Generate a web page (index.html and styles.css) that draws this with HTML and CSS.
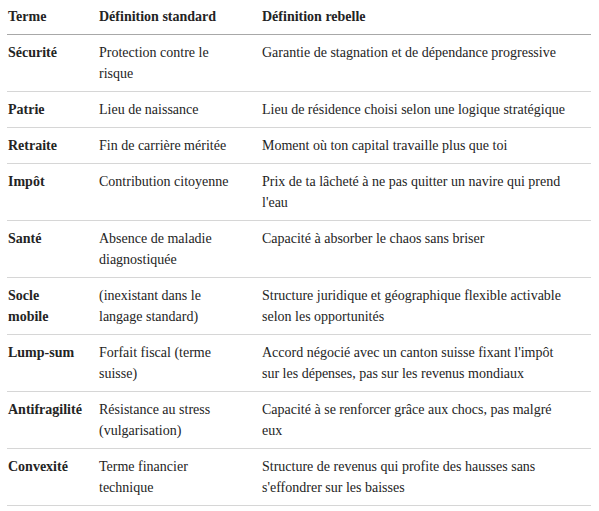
FILE: index.html
```html
<!DOCTYPE html>
<html lang="fr">
<head>
<meta charset="utf-8">
<link rel="stylesheet" href="styles.css">
</head>
<body>
<table class="defs">
  <colgroup>
    <col class="c1"><col class="c2"><col class="c3">
  </colgroup>
  <thead>
    <tr><th>Terme</th><th>Définition standard</th><th>Définition rebelle</th></tr>
  </thead>
  <tbody>
    <tr><td class="term">Sécurité</td><td>Protection contre le risque</td><td class="rebel">Garantie de stagnation et de dépendance progressive</td></tr>
    <tr><td class="term">Patrie</td><td>Lieu de naissance</td><td class="rebel">Lieu de résidence choisi selon une logique stratégique</td></tr>
    <tr><td class="term">Retraite</td><td>Fin de carrière méritée</td><td class="rebel">Moment où ton capital travaille plus que toi</td></tr>
    <tr><td class="term">Impôt</td><td>Contribution citoyenne</td><td class="rebel">Prix de ta lâcheté à ne pas quitter un navire qui prend l'eau</td></tr>
    <tr><td class="term">Santé</td><td>Absence de maladie diagnostiquée</td><td class="rebel">Capacité à absorber le chaos sans briser</td></tr>
    <tr><td class="term">Socle<br>mobile</td><td>(inexistant dans le langage standard)</td><td class="rebel">Structure juridique et géographique flexible activable selon les opportunités</td></tr>
    <tr><td class="term">Lump-sum</td><td>Forfait fiscal (terme suisse)</td><td class="rebel">Accord négocié avec un canton suisse fixant l'impôt sur les dépenses, pas sur les revenus mondiaux</td></tr>
    <tr><td class="term">Antifragilité</td><td>Résistance au stress (vulgarisation)</td><td class="rebel">Capacité à se renforcer grâce aux chocs, pas malgré eux</td></tr>
    <tr><td class="term">Convexité</td><td>Terme financier technique</td><td class="rebel">Structure de revenus qui profite des hausses sans s'effondrer sur les baisses</td></tr>
  </tbody>
</table>
</body>
</html>
```
FILE: styles.css
```css
html, body {
  background: #ffffff;
}
body {
  margin: 0 8px 0 7px;
  font-family: "Liberation Serif", "Times New Roman", serif;
  color: #242424;
}
.defs {
  width: 100%;
  border-collapse: collapse;
  table-layout: fixed;
  font-size: 14px;
  line-height: 21px;
}
.c1 { width: 91px; }
.c2 { width: 163px; }
.defs th {
  text-align: left;
  font-weight: 700;
  font-size: 14px;
  padding: 6px 16px 7px 1px;
  border-bottom: 1px solid #a8a8a8;
  vertical-align: top;
}
.defs td {
  padding: 7px 16px 7px 1px;
  border-bottom: 1px solid #d6d6d6;
  vertical-align: top;
}
.defs th:first-child,
.defs td.term {
  padding-right: 6px;
}
.defs td.term {
  font-weight: 700;
}
.defs td.rebel {
  padding-right: 22px;
}
```
